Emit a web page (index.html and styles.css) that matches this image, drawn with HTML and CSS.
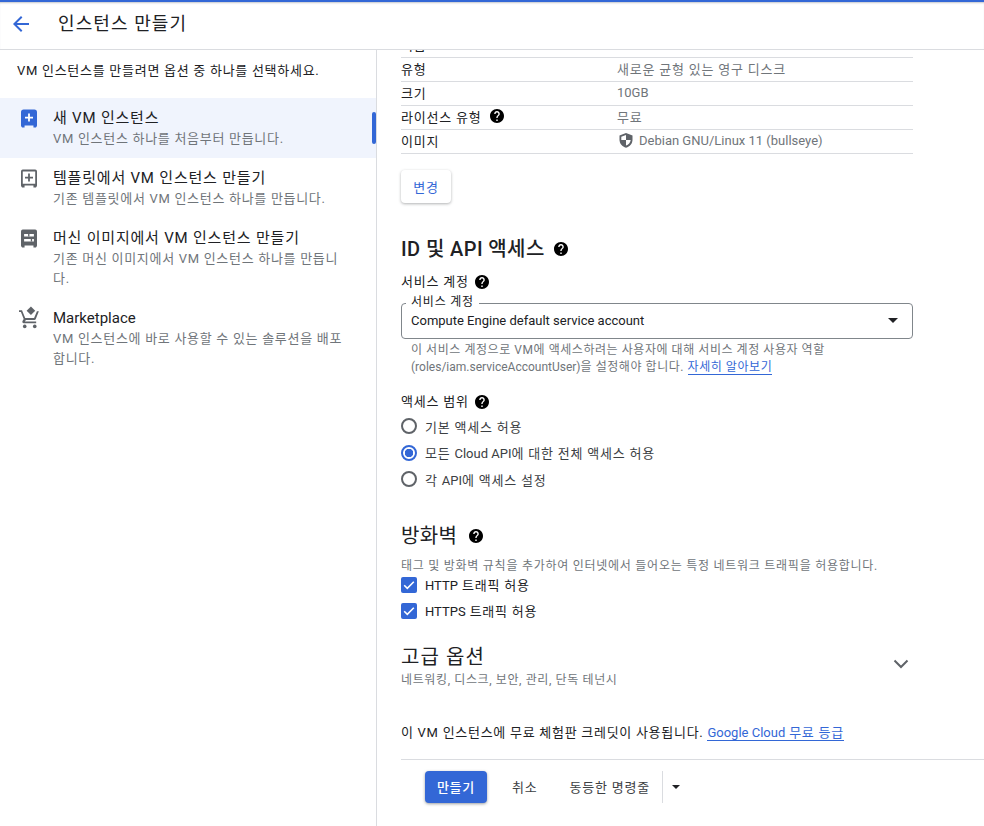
FILE: index.html
```html
<!DOCTYPE html>
<html lang="ko">
<head>
<meta charset="utf-8">
<title>인스턴스 만들기</title>
<link rel="stylesheet" href="styles.css">
</head>
<body>
<header class="topbar">
  <svg class="back" viewBox="0 0 24 24"><path d="M20 11H7.83l5.59-5.59L12 4l-8 8 8 8 1.41-1.41L7.83 13H20z"/></svg>
  <h1 class="page-title">인스턴스 만들기</h1>
</header>
<div class="shell">
  <aside class="side">
    <p class="intro">VM 인스턴스를 만들려면 옵션 중 하나를 선택하세요.</p>
    <div class="opt opt-active">
      <svg class="opt-icon blue" viewBox="0 0 18 20"><path d="M3 0h12a3 3 0 0 1 3 3v15a2 2 0 0 1-1 1.700V20h-3v-2H4v2H1v-.3A2 2 0 0 1 0 18V3a3 3 0 0 1 3-3z"/><path class="cut" d="M8 4.500h2V8h3.500v2H10v3.500H8V10H4.500V8H8z"/></svg>
      <div><div class="opt-title">새 VM 인스턴스</div><div class="opt-desc">VM 인스턴스 하나를 처음부터 만듭니다.</div></div>
      <span class="indicator"></span>
    </div>
    <div class="opt">
      <svg class="opt-icon gray" viewBox="0 0 18 20"><path fill-rule="evenodd" d="M2 0h14a2 2 0 0 1 2 2v16a2 2 0 0 1-1 1.700V20h-3v-2H4v2H1v-.3A2 2 0 0 1 0 18V2a2 2 0 0 1 2-2zm0 2v14h14V2z"/><path d="M8 4.500h2V8h3.500v2H10v3.500H8V10H4.500V8H8z"/></svg>
      <div><div class="opt-title">템플릿에서 VM 인스턴스 만들기</div><div class="opt-desc">기존 템플릿에서 VM 인스턴스 하나를 만듭니다.</div></div>
    </div>
    <div class="opt">
      <svg class="opt-icon gray" viewBox="0 0 18 20"><path d="M2 0h14a2 2 0 0 1 2 2v16a2 2 0 0 1-1 1.700V20h-3v-2H4v2H1v-.3A2 2 0 0 1 0 18V2a2 2 0 0 1 2-2z"/><path class="cut" d="M3.500 5h11v2.800h-11zM3.500 10.500h11v2.800h-11z"/><path d="M8 5h1.500v2.800H8zM11 10.500h1.500v2.800H11z"/></svg>
      <div><div class="opt-title">머신 이미지에서 VM 인스턴스 만들기</div><div class="opt-desc">기존 머신 이미지에서 VM 인스턴스 하나를 만듭니다.</div></div>
    </div>
    <div class="opt">
      <svg class="opt-icon gray cart" viewBox="0 0 22 23"><path d="M12.500 0l4.500 4.500L12.500 9 8 4.500z"/><path d="M0 4h3.200l.7 1.800L6.500 12h9.300l3-7h2l-3.300 8.300c-.3.500-.8.700-1.300.7H7.200l-1 1.800H18v1.700H5c-1.200 0-1.900-1.300-1.300-2.300l1.200-2.100L2 5.700H0z"/><circle cx="6" cy="20.800" r="1.900"/><circle cx="16.500" cy="20.800" r="1.900"/></svg>
      <div><div class="opt-title opt-title-latin">Marketplace</div><div class="opt-desc">VM 인스턴스에 바로 사용할 수 있는 솔루션을 배포합니다.</div></div>
    </div>
  </aside>
  <main class="content">
    <div class="row row-clipped"><span class="clip-label">이름</span></div>
    <div class="row"><span class="cell-k">유형</span><span class="cell-v">새로운 균형 있는 영구 디스크</span></div>
    <div class="row"><span class="cell-k">크기</span><span class="cell-v latin">10GB</span></div>
    <div class="row"><span class="cell-k">라이선스 유형<svg class="help help-row" viewBox="2 2 20 20"><path d="M12 2C6.480 2 2 6.480 2 12s4.480 10 10 10 10-4.480 10-10S17.520 2 12 2zm1 17h-2v-2h2v2zm2.070-7.750l-.9.920C13.450 12.900 13 13.500 13 15h-2v-.5c0-1.100.45-2.100 1.170-2.830l1.240-1.260c.37-.36.59-.86.59-1.410 0-1.100-.9-2-2-2s-2 .9-2 2H8c0-2.210 1.790-4 4-4s4 1.790 4 4c0 .88-.36 1.680-.93 2.250z"/></svg></span><span class="cell-v">무료</span></div>
    <div class="row"><span class="cell-k">이미지</span><span class="cell-v latin"><svg class="shield" viewBox="0 0 14 15"><path d="M7 0l6.500 2.500v4.300c0 3.700-2.700 7-6.500 8-3.800-1-6.500-4.300-6.500-8V2.500z"/><path class="cut" d="M7 2v5H2.300V3.700zM7 7h4.700c-.3 2.500-2.200 4.800-4.700 5.600z"/></svg>Debian GNU/Linux 11 (bullseye)</span></div>
    <button class="btn-change" type="button">변경</button>

    <h2 class="h2 h2-id">ID 및 API 액세스<svg class="help help-h" viewBox="2 2 20 20"><path d="M12 2C6.480 2 2 6.480 2 12s4.480 10 10 10 10-4.480 10-10S17.520 2 12 2zm1 17h-2v-2h2v2zm2.070-7.750l-.9.920C13.450 12.900 13 13.500 13 15h-2v-.5c0-1.100.45-2.100 1.170-2.830l1.240-1.260c.37-.36.59-.86.59-1.410 0-1.100-.9-2-2-2s-2 .9-2 2H8c0-2.210 1.790-4 4-4s4 1.790 4 4c0 .88-.36 1.680-.93 2.250z"/></svg></h2>
    <div class="label label-svc">서비스 계정<svg class="help help-l" viewBox="2 2 20 20"><path d="M12 2C6.480 2 2 6.480 2 12s4.480 10 10 10 10-4.480 10-10S17.520 2 12 2zm1 17h-2v-2h2v2zm2.070-7.750l-.9.920C13.450 12.900 13 13.500 13 15h-2v-.5c0-1.100.45-2.100 1.170-2.830l1.240-1.260c.37-.36.59-.86.59-1.410 0-1.100-.9-2-2-2s-2 .9-2 2H8c0-2.210 1.790-4 4-4s4 1.790 4 4c0 .88-.36 1.680-.93 2.250z"/></svg></div>
    <div class="select">
      <span class="float-label">서비스 계정</span>
      <span class="latin">Compute Engine default service account</span>
      <span class="caret"></span>
    </div>
    <p class="hint">이 서비스 계정으로 VM에 액세스하려는 사용자에 대해 서비스 계정 사용자 역할 <span class="latin">(roles/iam.serviceAccountUser)</span>을 설정해야 합니다. <a class="link">자세히 알아보기</a></p>
    <div class="label label-scope">액세스 범위<svg class="help help-l" viewBox="2 2 20 20"><path d="M12 2C6.480 2 2 6.480 2 12s4.480 10 10 10 10-4.480 10-10S17.520 2 12 2zm1 17h-2v-2h2v2zm2.070-7.750l-.9.920C13.450 12.900 13 13.500 13 15h-2v-.5c0-1.100.45-2.100 1.170-2.830l1.240-1.260c.37-.36.59-.86.59-1.410 0-1.100-.9-2-2-2s-2 .9-2 2H8c0-2.210 1.790-4 4-4s4 1.790 4 4c0 .88-.36 1.680-.93 2.250z"/></svg></div>
    <div class="choice"><span class="radio"></span><span>기본 액세스 허용</span></div>
    <div class="choice"><span class="radio radio-on"></span><span>모든 <span class="latin">Cloud API</span>에 대한 전체 액세스 허용</span></div>
    <div class="choice"><span class="radio"></span><span>각 <span class="latin">API</span>에 액세스 설정</span></div>

    <h2 class="h2 h2-fw">방화벽<svg class="help help-h2" viewBox="2 2 20 20"><path d="M12 2C6.480 2 2 6.480 2 12s4.480 10 10 10 10-4.480 10-10S17.520 2 12 2zm1 17h-2v-2h2v2zm2.070-7.750l-.9.920C13.450 12.900 13 13.500 13 15h-2v-.5c0-1.100.45-2.100 1.170-2.830l1.240-1.260c.37-.36.59-.86.59-1.410 0-1.100-.9-2-2-2s-2 .9-2 2H8c0-2.210 1.790-4 4-4s4 1.790 4 4c0 .88-.36 1.680-.93 2.250z"/></svg></h2>
    <p class="fw-desc">태그 및 방화벽 규칙을 추가하여 인터넷에서 들어오는 특정 네트워크 트래픽을 허용합니다.</p>
    <div class="choice check-row"><span class="check"><svg viewBox="0 0 16 16"><path d="M3.200 8.300l3.100 3 6.500-6.500" /></svg></span><span><span class="latin">HTTP</span> 트래픽 허용</span></div>
    <div class="choice check-row"><span class="check"><svg viewBox="0 0 16 16"><path d="M3.200 8.300l3.100 3 6.500-6.500" /></svg></span><span><span class="latin">HTTPS</span> 트래픽 허용</span></div>

    <div class="advanced">
      <div>
        <div class="adv-title">고급 옵션</div>
        <div class="adv-sub">네트워킹, 디스크, 보안, 관리, 단독 테넌시</div>
      </div>
      <svg class="chevron" viewBox="0 0 16 10"><path d="M1.500 1.500L8 8l6.500-6.500"/></svg>
    </div>
    <p class="credit">이 VM 인스턴스에 무료 체험판 크레딧이 사용됩니다. <a class="link"><span class="latin">Google Cloud</span> 무료 등급</a></p>
    <footer class="actions">
      <button class="btn-create" type="button">만들기</button>
      <button class="btn-text btn-cancel" type="button">취소</button>
      <button class="btn-text btn-cmd" type="button">동등한 명령줄</button>
      <span class="divider"></span>
      <span class="caret caret-small"></span>
    </footer>
  </main>
</div>
</body>
</html>
```
FILE: styles.css
```css
* { box-sizing: border-box; }
html, body { margin: 0; height: 826px; overflow: hidden; background: #fff; }
body { font-family: Roboto, "Noto Sans CJK KR", sans-serif; font-size: 13px; color: #202124; letter-spacing: .06em; }
p, h1, h2 { margin: 0; font-weight: 400; }
.latin { letter-spacing: 0; }

.topbar { height: 50px; display: flex; align-items: center; padding-bottom: 3px; border-top: 2px solid #3367d6; border-bottom: 1px solid #dadce0; box-shadow: inset 0 2px 2px -1px #c4c7cc; }
.back { width: 24px; height: 24px; margin-left: 9px; fill: #3367d6; }
.page-title { margin-left: 25px; font-size: 18px; line-height: 24px; letter-spacing: 1.100px; }

.shell { display: flex; height: 776px; }
.side { width: 377px; flex: none; border-right: 1px solid #dadce0; }
.intro { padding: 12px 0 0 17px; height: 48px; line-height: 18px; color: #202124; letter-spacing: .72px; }
.opt { position: relative; display: flex; padding: 9px 30px 9px 21px; }
.opt-active { background: #f0f4fd; }
.opt-icon { width: 16px; height: 19px; flex: none; margin: 2px 16px 0 0; }
.cart { width: 21px; height: 23px; margin: -1px 13px 0 -2px; }
.blue { fill: #3367d6; }
.gray { fill: #5f6368; }
.cut { fill: #fff; }
.opt-title { font-size: 15px; line-height: 20px; color: #202124; padding-top: 1px; height: 21px; margin-bottom: 1px; letter-spacing: .8px; }
.opt-title-latin { letter-spacing: 0; }
.opt-desc { font-size: 13px; line-height: 20px; color: #70757a; letter-spacing: .7px; }
.indicator { position: absolute; right: 0; top: 14px; width: 4px; height: 32px; border-radius: 2px; background: #3367d6; }

.content { flex: 1; padding-left: 24px; overflow: hidden; }
.row { width: 512px; height: 24px; display: flex; align-items: center; padding-bottom: 3px; border-bottom: 1px solid #dadce0; }
.row-clipped { height: 8px; padding-bottom: 0; align-items: flex-end; overflow: hidden; }
.clip-label { line-height: 20px; margin-bottom: 1px; }
.cell-k { width: 216px; flex: none; display: flex; align-items: center; }
.cell-v { display: flex; align-items: center; color: #70757a; }
.help { fill: #000; flex: none; }
.help-row { width: 14px; height: 14px; margin-left: 9px; }
.help-h { width: 14px; height: 14px; margin-left: 9px; }
.help-h2 { width: 14px; height: 14px; margin-left: 12px; }
.help-l { width: 14px; height: 14px; margin-left: 6px; }
.shield { width: 14px; height: 15px; margin: 0 6px 0 2px; fill: #5f6368; }

.btn-change { display: block; margin-top: 16px; width: 50px; height: 33px; padding: 0; border: 0; border-radius: 4px; background: #fff; color: #3367d6; font: inherit; letter-spacing: inherit; box-shadow: 0 1px 3px rgba(60,64,67,.4); }

.h2 { display: flex; align-items: center; font-size: 20px; line-height: 24px; }
.h2-id { margin-top: 34px; font-weight: 500; letter-spacing: .4px; }
.label { display: flex; align-items: center; line-height: 20px; }
.label-svc { margin-top: 11px; }
.select { position: relative; width: 512px; height: 36px; margin-top: 11px; padding: 0 9px 2px; display: flex; align-items: center; border: 1px solid #80868b; border-radius: 4px; }
.float-label { position: absolute; left: 4px; top: -11px; padding: 0 5px; background: #fff; font-size: 12px; line-height: 18px; }
.caret { width: 0; height: 0; margin-left: auto; margin-right: 5px; border-left: 5px solid transparent; border-right: 5px solid transparent; border-top: 5px solid #202124; }
.hint { width: 460px; margin: 3px 0 0 10px; font-size: 12px; line-height: 17px; color: #70757a; letter-spacing: .55px; }
.link { color: #3367d6; border-bottom: 1px solid #3367d6; }
.label-scope { margin-top: 16px; }
.choice { display: flex; align-items: center; height: 26.500px; color: #3c4043; }
.label-scope + .choice { margin-top: 1px; }
.radio { width: 16px; height: 16px; margin-right: 8px; border: 2px solid #5f6368; border-radius: 50%; }
.radio-on { border-color: #3367d6; background: radial-gradient(circle, #3367d6 4px, transparent 4.500px); }

.h2-fw { margin-top: 31px; letter-spacing: .4px; }
.fw-desc { margin-top: 13px; font-size: 12px; line-height: 11px; color: #70757a; white-space: nowrap; letter-spacing: .74px; }
.check-row { color: #202124; height: 26px; }
.check { width: 16px; height: 16px; margin-right: 8px; border-radius: 2px; background: #3367d6; }
.check svg { display: block; width: 16px; height: 16px; fill: none; stroke: #fff; stroke-width: 1.600; }

.advanced { width: 512px; margin-top: 19px; display: flex; align-items: center; justify-content: space-between; }
.adv-title { font-size: 20px; line-height: 28px; letter-spacing: 1.100px; }
.adv-sub { font-size: 12px; line-height: 18px; color: #70757a; letter-spacing: .62px; }
.chevron { width: 16px; height: 10px; margin: 0 4px 4px 0; fill: none; stroke: #5f6368; stroke-width: 2; }
.credit { margin-top: 34px; line-height: 20px; letter-spacing: .72px; }
.actions { display: flex; align-items: center; margin-top: 16px; padding: 11px 0 0 24px; border-top: 1px solid #dadce0; }
.btn-create { width: 62px; height: 32px; border: 0; border-radius: 4px; background: #3367d6; color: #fff; font: inherit; letter-spacing: inherit; font-weight: 500; box-shadow: 0 1px 3px rgba(60,64,67,.5); }
.btn-text { border: 0; background: none; padding: 0; font: inherit; letter-spacing: inherit; color: #3c4043; }
.btn-cancel { margin-left: 25px; }
.btn-cmd { margin-left: 32px; }
.divider { width: 1px; height: 32px; margin-left: 12px; background: #dadce0; }
.caret-small { margin: 1px 0 0 9px; border-left-width: 4px; border-right-width: 4px; border-top-width: 4px; }
```
